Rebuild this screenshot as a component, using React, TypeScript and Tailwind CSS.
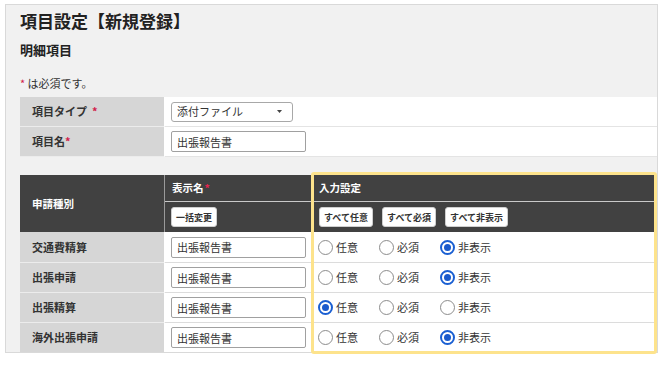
import React, { useState } from "react";

const FONT = { fontFamily: '"Noto Sans CJK JP", "Noto Sans", sans-serif' };

const OPTIONS = ["任意", "必須", "非表示"];

const INITIAL = [
  { name: "交通費精算", label: "出張報告書", sel: 2 },
  { name: "出張申請", label: "出張報告書", sel: 2 },
  { name: "出張精算", label: "出張報告書", sel: 0 },
  { name: "海外出張申請", label: "出張報告書", sel: 2 },
];

const Radio: React.FC<{ checked: boolean }> = ({ checked }) =>
  checked ? (
    <span className="flex h-[15px] w-[15px] items-center justify-center rounded-full border-2 border-[#1a5fd2] bg-white">
      <span className="h-[7px] w-[7px] rounded-full bg-[#1a5acc]" />
    </span>
  ) : (
    <span className="h-[15px] w-[15px] rounded-full border border-[#8c8c8c] bg-white" />
  );

const HeadButton: React.FC<{ children: React.ReactNode }> = ({ children }) => (
  <button className="h-[20px] rounded-[3px] border border-[#cfcfcf] bg-white px-[4px] text-[9px] font-bold leading-none text-[#333]">
    {children}
  </button>
);

export default function App() {
  const [rows, setRows] = useState(INITIAL);

  return (
    <div style={FONT} className="min-h-[365px] bg-white pt-[4px] text-[#333]">
      <div className="ml-[5px] w-[653px] border border-[#d9d9d9] bg-[#f1f1f1] pl-[14px]">
        {/* TITLE */}
        <h1 className="mt-[4px] h-[24px] text-[17px] font-bold leading-[24px] text-[#222]">
          項目設定【新規登録】
        </h1>
        <h2 className="mt-[7px] h-[20px] text-[13px] font-bold leading-[20px] text-[#222]">
          明細項目
        </h2>
        <p className="mt-[15px] h-[16px] text-[11px] leading-[16px]">
          <span className="text-[#d2204a]">*</span> は必須です。
        </p>

        {/* BASIC TABLE */}
        <div className="mt-[6px] grid grid-cols-[145px_1fr] text-[11px]">
          <div className="flex h-[30px] items-center border-b border-[#ececec] border-r border-r-white bg-[#d6d6d6] pl-[12px] font-bold">
            項目タイプ <span className="ml-[5px] text-[#d2204a]">*</span>
          </div>
          <div className="flex h-[30px] items-center border-b border-[#e4e4e4] bg-white pl-[6px]">
            <div className="flex h-[20px] w-[122px] items-center justify-between rounded-[3px] border border-[#a8a8a8] bg-white pl-[5px] pr-[10px]">
              <span>添付ファイル</span>
              <svg width="5" height="3" viewBox="0 0 5 3">
                <path d="M0 0h5L2.5 3z" fill="#444" />
              </svg>
            </div>
          </div>
          <div className="flex h-[30px] items-center border-b border-[#ececec] border-r border-r-white bg-[#d6d6d6] pl-[12px] font-bold">
            項目名<span className="text-[#d2204a]">*</span>
          </div>
          <div className="flex h-[30px] items-center border-b border-[#e4e4e4] bg-white pl-[6px]">
            <input
              defaultValue="出張報告書"
              className="h-[21px] w-[135px] rounded-[2px] border border-[#a0a0a0] px-[5px] text-[11px] outline-none"
            />
          </div>
        </div>

        {/* DETAIL TABLE */}
        <div className="relative mt-[18px] grid grid-cols-[145px_148px_1fr] text-[11px]">
          {/* header */}
          <div className="row-span-2 flex items-center border-r border-[#9a9a9a] bg-[#414141] pl-[12px] text-[10.5px] font-bold text-white">
            申請種別
          </div>
          <div className="flex h-[27px] items-center border-b border-[#c9c9c9] bg-[#414141] pl-[7px] text-[10.5px] font-bold text-white">
            表示名<span className="ml-[1px] text-[#e8244f]">*</span>
          </div>
          <div className="flex h-[27px] items-center border-b border-[#c9c9c9] bg-[#414141] pl-[6px] text-[10.5px] font-bold text-white">
            入力設定
          </div>
          <div className="flex h-[30px] items-center bg-[#414141] pl-[6px]">
            <HeadButton>一括変更</HeadButton>
          </div>
          <div className="flex h-[30px] items-center gap-[9px] bg-[#414141] pl-[6px]">
            <HeadButton>すべて任意</HeadButton>
            <HeadButton>すべて必須</HeadButton>
            <HeadButton>すべて非表示</HeadButton>
          </div>

          {/* rows */}
          {rows.map((r, i) => (
            <React.Fragment key={r.name}>
              <div
                className={`flex h-[30px] items-center border-r border-r-white bg-[#d6d6d6] pl-[12px] font-bold ${
                  i > 0 ? "border-t border-t-[#ececec]" : ""
                }`}
              >
                {r.name}
              </div>
              <div
                className={`flex h-[30px] items-center bg-white pl-[6px] ${
                  i > 0 ? "border-t border-[#dcdcdc]" : ""
                }`}
              >
                <input
                  defaultValue={r.label}
                  className="h-[21px] w-[135px] rounded-[2px] border border-[#a0a0a0] px-[5px] text-[11px] outline-none"
                />
              </div>
              <div
                className={`flex h-[30px] items-center bg-white pl-[5px] ${
                  i > 0 ? "border-t border-[#dcdcdc]" : ""
                }`}
              >
                {OPTIONS.map((o, j) => (
                  <label
                    key={o}
                    onClick={() =>
                      setRows((prev) =>
                        prev.map((p, k) => (k === i ? { ...p, sel: j } : p))
                      )
                    }
                    className="flex w-[61px] cursor-pointer items-center gap-[3px]"
                  >
                    <Radio checked={r.sel === j} />
                    <span>{o}</span>
                  </label>
                ))}
              </div>
            </React.Fragment>
          ))}

          {/* highlight */}
          <div className="pointer-events-none absolute left-[291px] top-[-3px] h-[182px] w-[346px] rounded-[3px] border-[3px] border-[#fde38c]" />
        </div>
      </div>
    </div>
  );
}
